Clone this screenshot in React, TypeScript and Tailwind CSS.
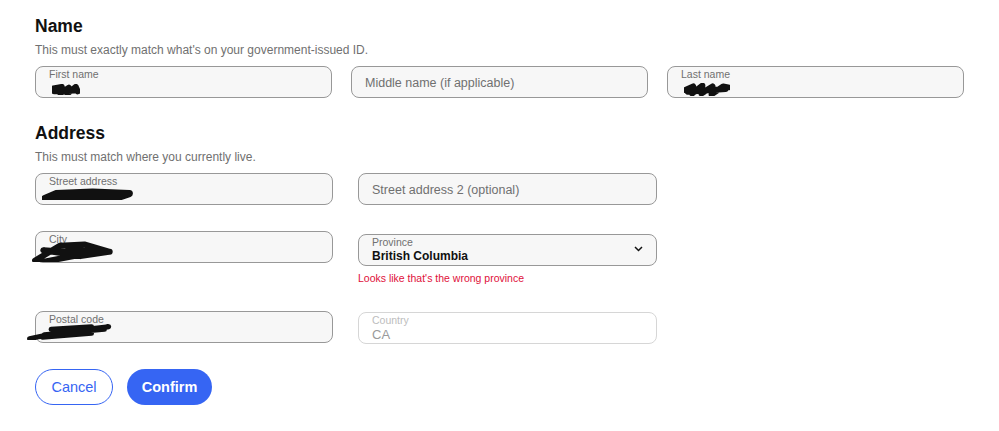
import React from "react";

const Scribble = ({ className, d, w = 7 }: { className: string; d: string; w?: number }) => (
  <svg className={`absolute pointer-events-none ${className}`} viewBox="0 0 100 30" preserveAspectRatio="none">
    <path
      d={d}
      fill="none"
      stroke="#111"
      strokeWidth={w}
      strokeLinecap="round"
      strokeLinejoin="round"
      vectorEffect="non-scaling-stroke"
    />
  </svg>
);

const Field = (props: any) => {
  const { label, value, placeholder, disabled, children, chevron } = props;
  return (
    <div
      className={`relative h-[32px] rounded-[8px] border ${
        disabled ? "border-[#d6d6d6] bg-white" : "border-[#989898] bg-[#f7f7f7]"
      }`}
    >
      {placeholder ? (
        <div className="pl-[13px] pt-[8px] text-[12.5px] leading-[17px] text-[#707070]">{placeholder}</div>
      ) : (
        <div className="pl-[13px] pt-[1px]">
          <div className={`text-[10.5px] leading-[13px] ${disabled ? "text-[#bdbdbd]" : "text-[#707070]"}`}>{label}</div>
          <div
            className={`leading-[15px] ${disabled ? "text-[13px] text-[#9a9a9a]" : "text-[12px] text-[#111] font-bold"}`}
          >
            {value}
          </div>
        </div>
      )}
      {chevron && (
        <svg className="absolute right-[13px] top-[11px] w-[9px] h-[6px]" viewBox="0 0 9 6">
          <path d="M1 1l3.5 3.5L8 1" fill="none" stroke="#111" strokeWidth="1.5" />
        </svg>
      )}
      {children}
    </div>
  );
};

const App = () => {
  return (
    <div className="w-[999px] h-[431px] bg-white pl-[35px] pt-[15px] font-['Liberation_Sans',Arial,sans-serif]">
      <h2 className="text-[17.5px] leading-[22px] font-bold text-[#111]">Name</h2>
      <p className="mt-[5px] text-[12px] leading-[16px] text-[#707070]">
        This must exactly match what's on your government-issued ID.
      </p>
      <div className="mt-[8px] w-[929px] grid grid-cols-3 gap-x-[19px]">
        <Field label="First name" value="">
          <Scribble
            className="left-[16px] top-[17px] w-[28px] h-[11px]"
            w={6}
            d="M5 12 L35 8 L30 25 L60 10 L55 26 L85 8 L92 20 M8 20 L80 18"
          />
        </Field>
        <Field placeholder="Middle name (if applicable)" />
        <Field label="Last name" value="">
          <Scribble
            className="left-[16px] top-[16px] w-[46px] h-[13px]"
            w={6}
            d="M3 16 L20 8 L18 24 L40 6 L38 24 L62 8 L60 26 L85 8 L96 10 M8 20 L90 14"
          />
        </Field>
      </div>

      <h2 className="mt-[24px] text-[17.5px] leading-[22px] font-bold text-[#111]">Address</h2>
      <p className="mt-[5px] text-[12px] leading-[16px] text-[#707070]">This must match where you currently live.</p>

      <div className="mt-[8px] grid grid-cols-[298px_299px] gap-x-[25px]">
        <Field label="Street address" value="">
          <Scribble
            className="left-[6px] top-[14px] w-[92px] h-[12px]"
            w={7}
            d="M3 26 L15 14 L55 10 L95 14 L85 22 L40 22 L10 24 M20 18 L90 17"
          />
        </Field>
        <Field placeholder="Street address 2 (optional)" />
      </div>

      <div className="mt-[26px] h-[80px] grid grid-cols-[298px_299px] gap-x-[25px]">
        <Field label="City" value="">
          <Scribble
            className="left-[-5px] top-[8px] w-[82px] h-[22px]"
            w={6}
            d="M5 28 L35 8 L65 6 L95 16 L60 22 L15 14 L70 18 L5 32 M45 14 L96 16"
          />
        </Field>
        <div className="mt-[3px]">
          <Field label="Province" value="British Columbia" chevron />
          <p className="mt-[6px] text-[10.5px] leading-[13px] text-[#e0103a]">Looks like that's the wrong province</p>
        </div>
      </div>

      <div className="grid grid-cols-[298px_299px] gap-x-[25px]">
        <Field label="Postal code" value="">
          <Scribble
            className="left-[-9px] top-[8px] w-[86px] h-[20px]"
            w={5}
            d="M3 28 L40 18 L95 10 L60 18 L18 26 L75 20 M28 14 L75 10 M20 22 L90 14"
          />
        </Field>
        <div className="mt-[1px]">
          <Field label="Country" value="CA" disabled />
        </div>
      </div>

      <div className="mt-[25px] flex gap-x-[14px]">
        <button className="w-[78px] h-[36px] rounded-full border border-[#3665f3] text-[#3665f3] text-[14.5px] pt-[1px]">
          Cancel
        </button>
        <button className="w-[85px] h-[36px] rounded-full bg-[#3665f3] text-white text-[14.5px] font-bold pt-[1px]">
          Confirm
        </button>
      </div>
    </div>
  );
};

export default App;
